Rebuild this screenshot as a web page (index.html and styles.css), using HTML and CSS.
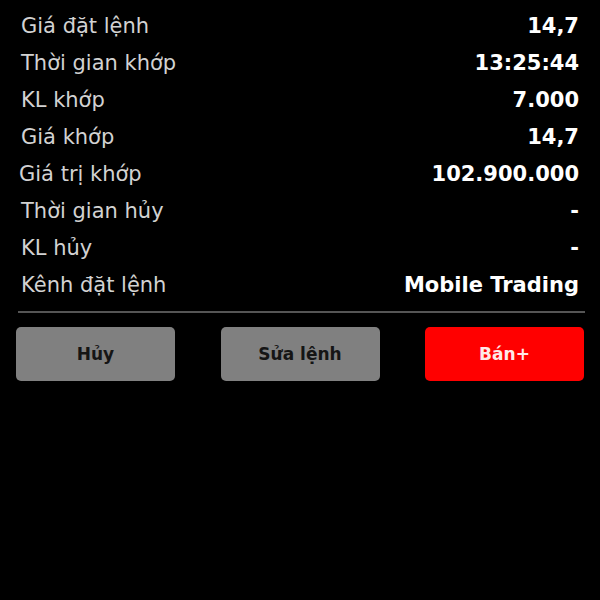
FILE: index.html
```html
<!DOCTYPE html>
<html lang="vi">
<head>
    <meta charset="UTF-8">
    <meta name="viewport" content="width=device-width, initial-scale=1.0">
    <title>Chi tiết lệnh</title>
    <link rel="stylesheet" href="styles.css">
</head>
<body>

    <div class="order-detail">
        <div class="detail-list">
            <div class="detail-row">
                <span class="detail-label">Giá đặt lệnh</span>
                <span class="detail-value">14,7</span>
            </div>
            <div class="detail-row">
                <span class="detail-label">Thời gian khớp</span>
                <span class="detail-value">13:25:44</span>
            </div>
            <div class="detail-row">
                <span class="detail-label">KL khớp</span>
                <span class="detail-value">7.000</span>
            </div>
            <div class="detail-row">
                <span class="detail-label">Giá khớp</span>
                <span class="detail-value">14,7</span>
            </div>
            <div class="detail-row">
                <span class="detail-label shift-left">Giá trị khớp</span>
                <span class="detail-value">102.900.000</span>
            </div>
            <div class="detail-row">
                <span class="detail-label">Thời gian hủy</span>
                <span class="detail-value">-</span>
            </div>
            <div class="detail-row">
                <span class="detail-label">KL hủy</span>
                <span class="detail-value">-</span>
            </div>
            <div class="detail-row">
                <span class="detail-label">Kênh đặt lệnh</span>
                <span class="detail-value">Mobile Trading</span>
            </div>
        </div>

        <hr class="divider">

        <div class="actions">
            <button type="button" class="btn btn-gray">Hủy</button>
            <button type="button" class="btn btn-gray">Sửa lệnh</button>
            <button type="button" class="btn btn-red">Bán+</button>
        </div>
    </div>

</body>
</html>
```

FILE: styles.css
```css
body {
    margin: 0;
    background-color: #000;
    font-family: "DejaVu Sans", Inter, sans-serif;
    height: 600px;
    overflow: hidden;
}

.detail-list {
    padding: 7px 21px 0 21px;
}

.detail-row {
    display: flex;
    justify-content: space-between;
    align-items: center;
    height: 37px;
}

.detail-label {
    color: #d2d2d2;
    font-size: 21px;
}

.shift-left {
    margin-left: -2px;
}

.detail-value {
    color: #fff;
    font-size: 21px;
    font-weight: 700;
}

.divider {
    border: none;
    border-top: 2px solid #555;
    margin: 8px 15px 0 18px;
}

.actions {
    display: flex;
    justify-content: space-between;
    padding: 14px 16px 0 16px;
}

.btn {
    width: 159px;
    height: 54px;
    border: none;
    border-radius: 5px;
    font-family: "DejaVu Sans", Inter, sans-serif;
    font-size: 17px;
    font-weight: 700;
    cursor: pointer;
}

.btn-gray {
    background-color: #808080;
    color: #151515;
}

.btn-red {
    background-color: #ff0000;
    color: #ffe9e9;
}
```
